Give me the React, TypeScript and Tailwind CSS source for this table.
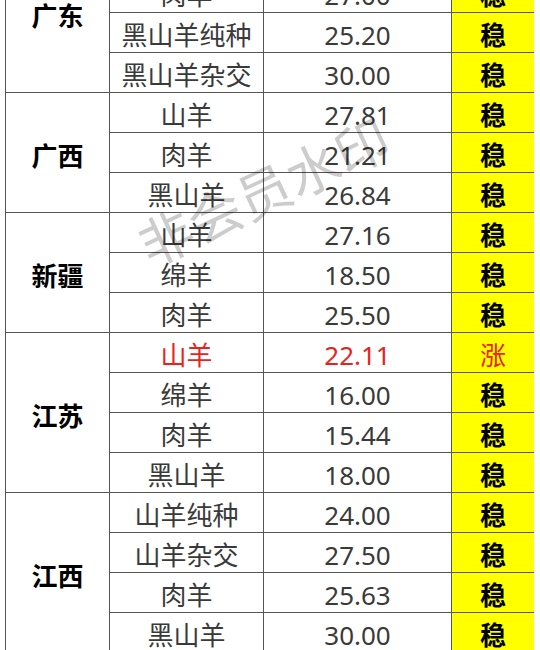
type Row = { kind: string; price: string; status: string; up?: boolean };
type Group = { province: string; rows: Row[] };

const groups: Group[] = [
  {
    province: "广东",
    rows: [
      { kind: "山羊", price: "26.00", status: "稳" },
      { kind: "肉羊", price: "27.00", status: "稳" },
      { kind: "黑山羊纯种", price: "25.20", status: "稳" },
      { kind: "黑山羊杂交", price: "30.00", status: "稳" },
    ],
  },
  {
    province: "广西",
    rows: [
      { kind: "山羊", price: "27.81", status: "稳" },
      { kind: "肉羊", price: "21.21", status: "稳" },
      { kind: "黑山羊", price: "26.84", status: "稳" },
    ],
  },
  {
    province: "新疆",
    rows: [
      { kind: "山羊", price: "27.16", status: "稳" },
      { kind: "绵羊", price: "18.50", status: "稳" },
      { kind: "肉羊", price: "25.50", status: "稳" },
    ],
  },
  {
    province: "江苏",
    rows: [
      { kind: "山羊", price: "22.11", status: "涨", up: true },
      { kind: "绵羊", price: "16.00", status: "稳" },
      { kind: "肉羊", price: "15.44", status: "稳" },
      { kind: "黑山羊", price: "18.00", status: "稳" },
    ],
  },
  {
    province: "江西",
    rows: [
      { kind: "山羊纯种", price: "24.00", status: "稳" },
      { kind: "山羊杂交", price: "27.50", status: "稳" },
      { kind: "肉羊", price: "25.63", status: "稳" },
      { kind: "黑山羊", price: "30.00", status: "稳" },
    ],
  },
];

const font = {
  fontFamily: '"Noto Sans", "Noto Sans CJK SC", sans-serif',
};

export default function App() {
  return (
    <div
      className="relative h-[650px] w-[540px] overflow-hidden bg-white"
      style={font}
    >
      {/* price table, scrolled so the first row is hidden */}
      <div className="ml-[5px] mt-[-67px] w-[529px] border-l border-[#555]">
        {groups.map((g) => (
          <div key={g.province} className="flex">
            <div className="flex w-[104px] shrink-0 items-center justify-center border-b border-r border-[#555] pt-[8px] text-[26px] font-bold text-black">
              {g.province}
            </div>
            <div className="flex flex-1 flex-col">
              {g.rows.map((r, i) => (
                <div
                  key={r.kind + i}
                  className="flex h-[40px] border-b border-[#555]"
                >
                  <div
                    className={`flex w-[154px] shrink-0 items-center justify-center border-r border-[#555] pt-[4px] text-[26px] leading-none ${r.up ? "text-[#e8231c]" : "text-[#3a3a3a]"}`}
                  >
                    {r.kind}
                  </div>
                  <div
                    className={`flex w-[188px] shrink-0 items-center justify-center border-r border-[#555] pt-[4px] text-[26px] leading-none ${r.up ? "text-[#e8231c]" : "text-[#3a3a3a]"}`}
                  >
                    {r.price}
                  </div>
                  <div
                    className={`flex flex-1 items-center justify-center bg-[#ffff00] pt-[4px] text-[26px] leading-none ${r.up ? "font-normal text-[#e8231c]" : "font-bold text-black"}`}
                  >
                    {r.status}
                  </div>
                </div>
              ))}
            </div>
          </div>
        ))}
      </div>

      {/* watermark */}
      <div className="pointer-events-none absolute left-[264px] top-[192px] -translate-x-1/2 -translate-y-1/2 -rotate-[25deg] whitespace-nowrap text-[54px] font-normal text-black/20">
        非会员水印
      </div>
    </div>
  );
}
